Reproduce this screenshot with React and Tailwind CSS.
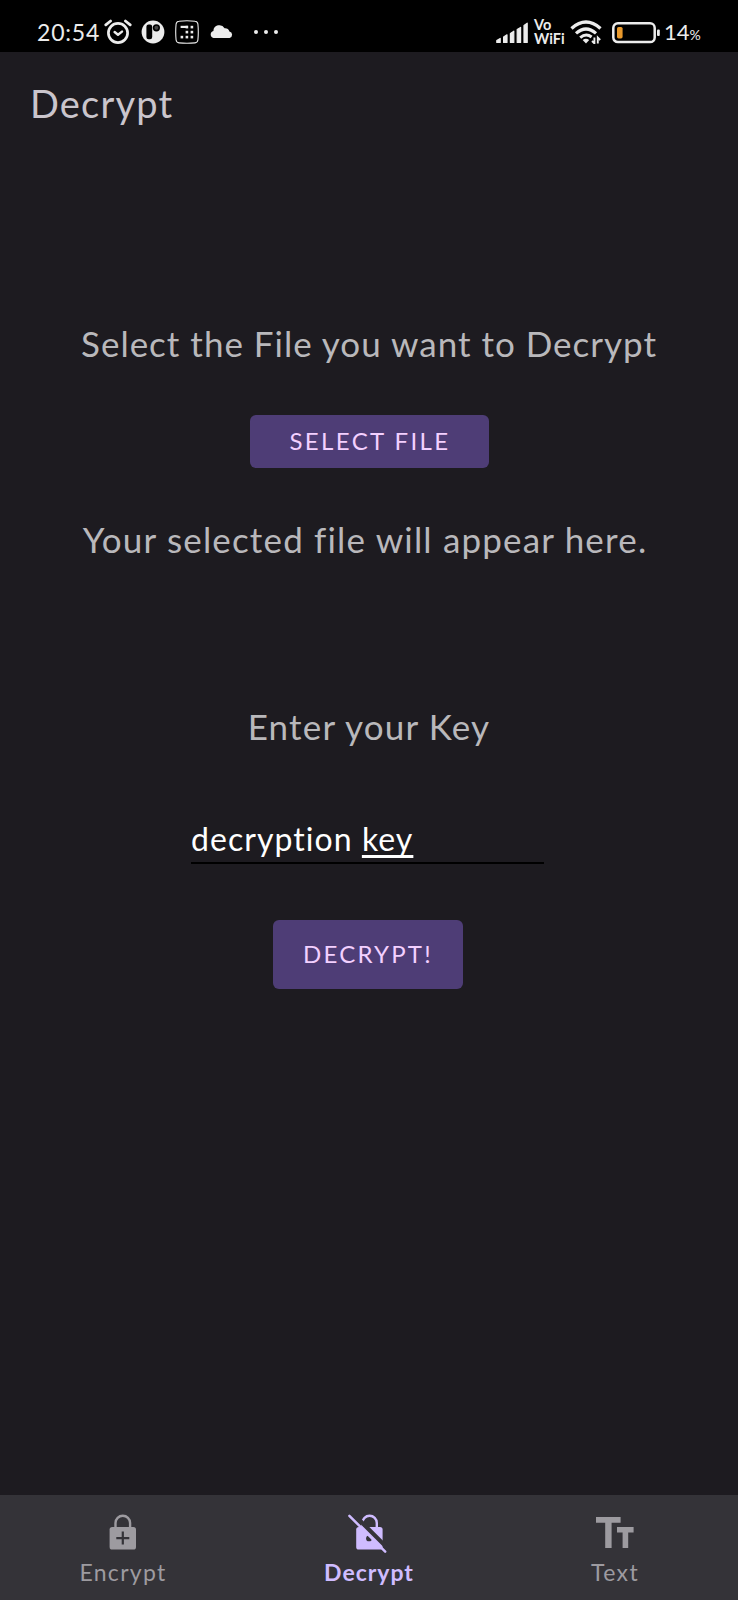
function AlarmIcon() {
  return (
    <svg className="h-7 w-7" viewBox="0 0 28 28" fill="none" stroke="#ececec" strokeLinecap="round">
      <circle cx="14" cy="15" r="9.6" strokeWidth="2.7" />
      <path d="M10.6 14 L14 16.8 L18 13.6" strokeWidth="2.4" strokeLinejoin="round" />
      <path d="M1.8 6.8 L6.6 3 M21.4 3 L26.2 6.8" strokeWidth="2.8" />
    </svg>
  );
}

function CircleAppIcon() {
  return (
    <svg className="h-6 w-6" viewBox="0 0 24 24">
      <circle cx="12" cy="12" r="11.4" fill="#ececec" />
      <rect x="5.4" y="4.6" width="5.8" height="14.6" rx="2.2" fill="#000" />
      <circle cx="15.4" cy="7.8" r="3.6" fill="#000" />
      <circle cx="15.4" cy="7.8" r="2" fill="#444" />
    </svg>
  );
}

function GridAppIcon() {
  return (
    <svg className="h-6 w-6" viewBox="0 0 24 24" fill="#ececec">
      <path
        d="M4 1.2 Q12 .2 20 1.2 Q22.6 1.4 22.9 4 Q23.7 12 22.9 20 Q22.6 22.6 20 22.9 Q12 23.7 4 22.9 Q1.4 22.6 1.1 20 Q.3 12 1.1 4 Q1.4 1.4 4 1.2Z"
        fill="none"
        stroke="#ececec"
        strokeWidth="1.1"
      />
      <rect x="5.6" y="5.8" width="7.4" height="2.2" />
      <rect x="10.6" y="5.8" width="2.6" height="2.6" />
      <rect x="15.6" y="5.8" width="2.6" height="2.6" />
      <rect x="10.6" y="10.8" width="2.6" height="2.6" />
      <rect x="15.6" y="10.8" width="2.6" height="2.6" />
      <rect x="5.6" y="15.8" width="2.6" height="2.6" />
      <rect x="10.6" y="15.8" width="2.6" height="2.6" />
      <rect x="15.6" y="15.8" width="2.6" height="2.6" />
    </svg>
  );
}

function CloudIcon() {
  return (
    <svg className="h-[13px] w-[23px]" viewBox="0 0 23 13" fill="#ececec">
      <path d="M3.5 13 A3.6 3.6 0 0 1 3.4 6 A6 6 0 0 1 14.6 3.2 A4.6 4.6 0 0 1 19.4 6.4 A3.4 3.4 0 0 1 19.6 13Z" />
    </svg>
  );
}

function SignalIcon() {
  return (
    <svg
      className="h-[22px] w-[32px]"
      viewBox="0 0 32 22"
      fill="#ececec"
      stroke="#ececec"
      strokeWidth="1.2"
      strokeLinejoin="round"
    >
      <path d="M.8 18.6 L4.2 16.4 V20.4 H.8Z" />
      <path d="M7.6 15 L11 12.8 V20.4 H7.6Z" />
      <path d="M14.4 11.4 L17.8 9.2 V20.4 H14.4Z" />
      <path d="M21.2 7.6 L24.6 5.4 V20.4 H21.2Z" />
      <path d="M28 3.4 L31.2 1.2 V20.4 H28Z" />
    </svg>
  );
}

function WifiIcon() {
  return (
    <svg className="h-6 w-8" viewBox="0 0 32 24" fill="none" stroke="#ececec">
      <path d="M1.5 8.4 Q16 -4.4 30.5 8.4" strokeWidth="3.4" />
      <path d="M6 13.4 Q16 4.6 26 13.4" strokeWidth="3.2" />
      <path d="M10.2 17.6 Q16 12.6 21.6 17" strokeWidth="3" />
      <path d="M12.6 20 Q16 17.4 19.2 20 L16 23.4Z" fill="#ececec" stroke="none" />
      <path d="M24.4 17.4 V23.4 L22 21 M27.8 23.6 V17.6 L30.2 20" strokeWidth="1.9" />
    </svg>
  );
}

function BatteryIcon() {
  return (
    <svg className="h-[22px] w-[48px]" viewBox="0 0 48 22">
      <rect x="1.3" y="1.3" width="41.4" height="18.8" rx="4.6" fill="none" stroke="#ececec" strokeWidth="2.5" />
      <rect x="5" y="5" width="5.6" height="11.4" rx="1.6" fill="#e9992c" />
      <rect x="45" y="7.4" width="2.8" height="6.6" rx="1" fill="#ececec" />
    </svg>
  );
}

function StatusBar() {
  return (
    <header className="flex h-[52px] items-start bg-black pt-[18px] text-[#ececec]">
      <span className="ml-[37px] w-[67px] text-[23px] leading-[28px] tracking-[0.8px]">20:54</span>
      <AlarmIcon />
      <span className="mt-[2px] ml-[9px]"><CircleAppIcon /></span>
      <span className="mt-[2px] ml-[10px]"><GridAppIcon /></span>
      <span className="mt-[7px] ml-[11px]"><CloudIcon /></span>
      <span className="mt-[12px] ml-[21px] flex gap-[6px]">
        <i className="h-1 w-1 rounded-full bg-[#ececec]" />
        <i className="h-1 w-1 rounded-full bg-[#ececec]" />
        <i className="h-1 w-1 rounded-full bg-[#ececec]" />
      </span>
      <span className="mt-[4px] ml-auto"><SignalIcon /></span>
      <span className="ml-[6px] w-[34px] text-[14.5px] leading-[14px] font-bold">
        Vo
        <br />
        WiFi
      </span>
      <span className="mt-[2px] ml-[2px]"><WifiIcon /></span>
      <span className="mt-[4px] ml-[10px]"><BatteryIcon /></span>
      <span className="mr-[37px] ml-[4px] flex w-[37px] items-baseline leading-[28px]">
        <span className="text-[22px]">14</span>
        <span className="text-[14px]">%</span>
      </span>
    </header>
  );
}

function LockPlusIcon() {
  return (
    <svg className="h-[38px] w-[40px]" viewBox="0 0 40 38">
      <path d="M12.5 15 V10 A7.3 7.3 0 0 1 27.1 10 V15" fill="none" stroke="#9d9ba0" strokeWidth="2.4" />
      <rect x="6.6" y="14" width="26.4" height="22.6" rx="2.6" fill="#9d9ba0" />
      <path d="M19.8 18.6 V31.6 M13.3 25.1 H26.3" stroke="#343338" strokeWidth="2.2" />
    </svg>
  );
}

function LockOffIcon() {
  return (
    <svg className="h-[42px] w-[42px]" viewBox="0 0 42 42">
      <path d="M14.4 15 V10 A7.2 7.2 0 0 1 28.8 10 V15" fill="none" stroke="#cfbcff" strokeWidth="2.4" />
      <rect x="8.2" y="14" width="26.4" height="22.6" rx="2.6" fill="#cfbcff" />
      <circle cx="21" cy="25.4" r="2.9" fill="#343338" />
      <path d="M5 .6 L42 37.6" stroke="#343338" strokeWidth="4.2" />
      <path d="M1.4 2.8 L37.2 38.6" stroke="#cfbcff" strokeWidth="2.5" strokeLinecap="round" />
    </svg>
  );
}

function TextSizeIcon() {
  return (
    <svg className="h-[38px] w-[40px]" viewBox="0 0 40 38" fill="#9d9ba0">
      <path d="M1 4 H25.6 V9.8 H16.6 V35 H10.2 V9.8 H1Z" />
      <path d="M22 14 H38.6 V19.6 H33.2 V35 H27.6 V19.6 H22Z" />
    </svg>
  );
}

function NavItem({ icon, label, className }) {
  return (
    <a className={"flex flex-1 flex-col items-center pt-[18px] text-[23px] " + className}>
      <span className="flex h-[42px] items-start">{icon}</span>
      <span className="mt-[3px] leading-[28px]">{label}</span>
    </a>
  );
}

export default function App() {
  return (
    <div className="flex h-[1600px] w-[738px] flex-col bg-[#1d1b20] font-['Lato',sans-serif]">
      <StatusBar />
      <h1 className="mt-[27px] ml-[30px] text-[38px] leading-[48px] tracking-[1.2px] text-[#cac5cc]">Decrypt</h1>
      <main className="flex flex-1 flex-col items-center pt-[196px] text-[#b9b8bb]">
        <p className="text-[35px] leading-[40px] tracking-[1px]">Select the File you want to Decrypt</p>
        <button className="mt-[52px] h-[53px] w-[239px] rounded-md bg-[#4e3d76] pb-[2px] pl-[2px] text-[24px] tracking-[2.4px] text-[#f3d0ff]">
          SELECT FILE
        </button>
        <p className="mt-[51px] mr-[8px] text-[35px] leading-[40px] tracking-[1.18px]">Your selected file will appear here.</p>
        <p className="mt-[147px] text-[35px] leading-[40px] tracking-[1.2px]">Enter your Key</p>
        <div className="mt-[75px] mr-[3px] h-[43px] w-[353px] border-b-2 border-black text-[32px] leading-[36px] tracking-[1.05px] text-white">
          decryption <span className="underline decoration-[3px] underline-offset-[4px] [text-decoration-skip-ink:none]">key</span>
        </div>
        <button className="mt-[56px] mr-[2px] h-[69px] w-[190px] rounded-md bg-[#4e3d76] pb-[2px] text-[24px] tracking-[2.2px] text-[#f3d0ff]">
          DECRYPT!
        </button>
      </main>
      <nav className="flex h-[105px] bg-[#343338]">
        <NavItem icon={<LockPlusIcon />} label="Encrypt" className="tracking-[1.3px] text-[#9d9ba0]" />
        <NavItem icon={<LockOffIcon />} label="Decrypt" className="font-bold tracking-[1px] text-[#cfbcff]" />
        <NavItem icon={<TextSizeIcon />} label="Text" className="tracking-[1.4px] text-[#9d9ba0]" />
      </nav>
    </div>
  );
}
